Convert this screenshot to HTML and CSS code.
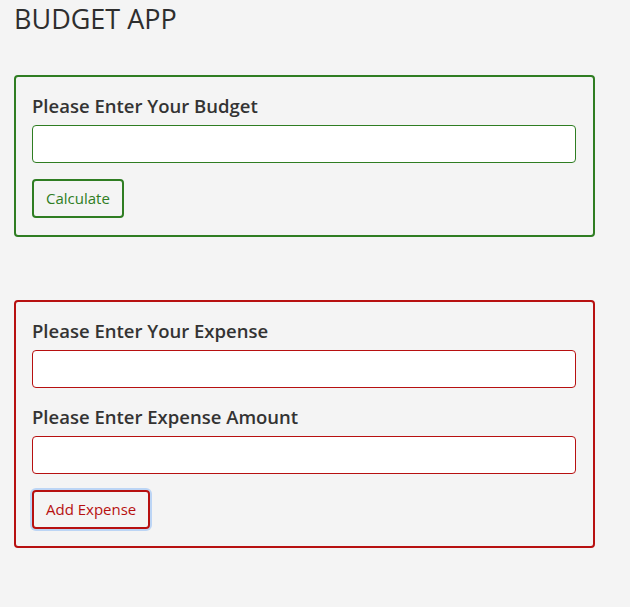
FILE: index.html
```html
<!DOCTYPE html>
<html>
<head>
<meta charset="utf-8">
<link rel="stylesheet" href="styles.css">
</head>
<body>
<h1 class="title">BUDGET APP</h1>
<div class="card card-green">
  <label class="label">Please Enter Your Budget</label>
  <input class="input" type="text">
  <button class="btn">Calculate</button>
</div>
<div class="card card-red">
  <label class="label">Please Enter Your Expense</label>
  <input class="input" type="text">
  <label class="label label-second">Please Enter Expense Amount</label>
  <input class="input" type="text">
  <button class="btn btn-focus">Add Expense</button>
</div>
</body>
</html>
```
FILE: styles.css
```css
html, body {
  margin: 0;
  padding: 0;
  background: #f4f4f4;
}
body {
  padding: 0 14px;
  font-family: "Open Sans", "Noto Sans", sans-serif;
  color: #333333;
}
.title {
  margin: 0;
  padding-top: 1px;
  height: 74px;
  font-size: 27px;
  font-weight: 400;
  line-height: 36px;
  color: #2e2e2e;
}
.card {
  box-sizing: border-box;
  width: 581px;
  border: 2px solid;
  border-radius: 4px;
  padding: 15px 17px 17px 16px;
  display: flex;
  flex-direction: column;
  align-items: flex-start;
}
.card-green {
  border-color: #2f7d22;
  color: #2f7d22;
  height: 162px;
  margin-bottom: 63px;
}
.card-red {
  border-color: #b71010;
  color: #b71010;
  height: 248px;
}
.label {
  display: block;
  font-size: 18.5px;
  font-weight: 600;
  line-height: 27px;
  color: #333333;
  margin-bottom: 6px;
}
.label-second {
  margin-top: 15px;
}
.input {
  box-sizing: border-box;
  width: 544px;
  height: 38px;
  border: 1px solid;
  color: inherit;
  border-radius: 4px;
  background: #ffffff;
  margin: 0;
  outline: none;
}
.card-green .input { border-color: #2f7d22; }
.card-red .input { border-color: #b71010; }
.btn {
  box-sizing: border-box;
  margin-top: 16px;
  height: 39px;
  padding: 0 12px;
  border: 2px solid currentColor;
  border-radius: 4px;
  background: transparent;
  color: inherit;
  font-family: "Open Sans", "Noto Sans", sans-serif;
  font-size: 15px;
  line-height: 1;
}
.btn-focus {
  box-shadow: 0 0 0 2px #bcd5f5;
}
```
